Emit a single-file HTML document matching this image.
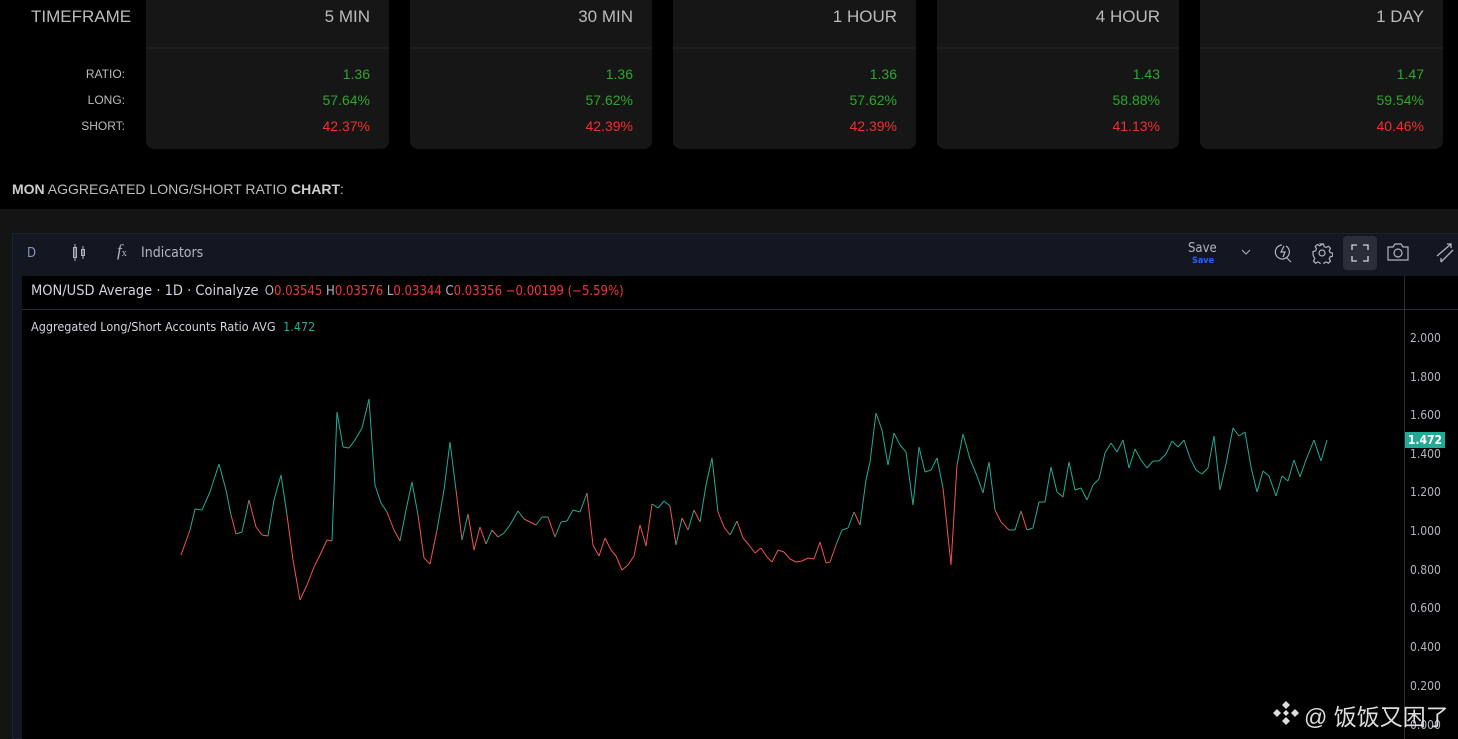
<!DOCTYPE html>
<html><head><meta charset="utf-8"><style>
*{margin:0;padding:0;box-sizing:border-box}
html,body{width:1458px;height:739px;overflow:hidden;background:#000;font-family:"Liberation Sans",Arial,sans-serif}
.card{position:absolute;top:0;height:149px;width:243px;background:#161616;border-radius:0 0 8px 8px}
.card .h{position:absolute;top:7px;right:19px;font-size:17px;color:#bbb}
.card .ln{position:absolute;top:47px;left:0;right:0;height:2px;background:#1f1f1f}
.card .v{position:absolute;right:19px;font-size:14px}
.g{color:#2ea62e}.r{color:#f03030}
.lbl{position:absolute;right:1333px;font-size:12px;color:#bbb}
.tf{position:absolute;left:31px;top:7px;font-size:17px;color:#bbb}
.title{position:absolute;left:12px;top:181px;font-size:14px;color:#bbb}
.title b{color:#ccc}
.band{position:absolute;left:0;top:209px;width:1458px;height:530px;background:#141414}
.cont{position:absolute;left:12px;top:233px;width:1446px;height:506px;background:#131722;border:1px solid #1e222d;border-right:none}
.pane{position:absolute;left:22px;top:276px;width:1436px;height:463px;background:#000}
.tb{position:absolute;font-family:"DejaVu Sans Condensed","Liberation Sans",sans-serif;color:#b2b5be}
.ax{position:absolute;left:1410px;font-size:12px;color:#b2b5be;font-family:"DejaVu Sans Condensed","Liberation Sans",sans-serif}
</style></head><body>
<div class="tf">TIMEFRAME</div>
<div class="lbl" style="top:67px">RATIO:</div>
<div class="lbl" style="top:93px">LONG:</div>
<div class="lbl" style="top:119px">SHORT:</div>

<div class="card" style="left:146px"><div class="h">5 MIN</div><div class="ln"></div><div class="v g" style="top:66px">1.36</div><div class="v g" style="top:92px">57.64%</div><div class="v r" style="top:118px">42.37%</div></div>
<div class="card" style="left:410px;width:242px"><div class="h">30 MIN</div><div class="ln"></div><div class="v g" style="top:66px">1.36</div><div class="v g" style="top:92px">57.62%</div><div class="v r" style="top:118px">42.39%</div></div>
<div class="card" style="left:673px"><div class="h">1 HOUR</div><div class="ln"></div><div class="v g" style="top:66px">1.36</div><div class="v g" style="top:92px">57.62%</div><div class="v r" style="top:118px">42.39%</div></div>
<div class="card" style="left:937px;width:242px"><div class="h">4 HOUR</div><div class="ln"></div><div class="v g" style="top:66px">1.43</div><div class="v g" style="top:92px">58.88%</div><div class="v r" style="top:118px">41.13%</div></div>
<div class="card" style="left:1200px"><div class="h">1 DAY</div><div class="ln"></div><div class="v g" style="top:66px">1.47</div><div class="v g" style="top:92px">59.54%</div><div class="v r" style="top:118px">40.46%</div></div>

<div class="title"><b>MON</b> AGGREGATED LONG/SHORT RATIO <b>CHART</b>:</div>
<div class="band"></div>
<div class="cont"></div>
<div class="tb" style="left:27px;top:246px;font-size:13px;color:#8a93b8">D</div>
<svg style="position:absolute;left:70px;top:243px" width="18" height="20" fill="none" stroke="#b2b5be" stroke-width="1"><rect x="3.5" y="4.5" width="3" height="10"/><line x1="5" y1="1" x2="5" y2="18"/><rect x="11.5" y="6.5" width="3" height="6"/><line x1="13" y1="3" x2="13" y2="16"/></svg>
<div class="tb" style="left:117px;top:241px;font-size:17px;font-style:italic;font-family:'Liberation Serif',serif">f<span style="font-size:10px;font-style:normal">x</span></div>
<div class="tb" style="left:141px;top:245px;font-size:14px">Indicators</div>
<div class="tb" style="left:1188px;top:241px;font-size:13px">Save</div>
<div class="tb" style="left:1192px;top:256px;font-size:9px;color:#2962ff;font-weight:bold">Save</div>
<svg style="position:absolute;left:1240px;top:248px" width="12" height="8" fill="none" stroke="#b2b5be"><path d="M2 2l4 4 4-4"/></svg>
<svg style="position:absolute;left:1273px;top:242px" width="22" height="22" fill="none" stroke="#b2b5be" stroke-width="1.2"><path d="M9 3a7 7 0 1 0 4 1"/><path d="M13 15l5 5"/><path d="M11 4l-3 6h4l-2 5"/></svg>
<svg style="position:absolute;left:1311px;top:242px" width="22" height="22" fill="none" stroke="#b2b5be" stroke-width="1.2"><circle cx="11" cy="11" r="3"/><path d="M9.5 2h3l.6 2.5 2 1 2.3-1.3 2.1 2.1-1.3 2.3 1 2 2.5.6v3l-2.5.6-1 2 1.3 2.3-2.1 2.1-2.3-1.3-2 1-.6 2.5h-3l-.6-2.5-2-1-2.3 1.3-2.1-2.1 1.3-2.3-1-2L2 12.5v-3l2.5-.6 1-2L4.2 4.6l2.1-2.1 2.3 1.3 2-1z"/></svg>
<div style="position:absolute;left:1343px;top:236px;width:34px;height:34px;background:#2a2e39;border-radius:4px"></div>
<svg style="position:absolute;left:1350px;top:243px" width="20" height="20" fill="none" stroke="#d1d4dc" stroke-width="1.3"><path d="M2 7V2h5M13 2h5v5M18 13v5h-5M7 18H2v-5"/></svg>
<svg style="position:absolute;left:1387px;top:242px" width="22" height="20" fill="none" stroke="#b2b5be" stroke-width="1.2"><path d="M1 5h5l2-3h6l2 3h5v13H1z"/><circle cx="11" cy="11" r="4"/></svg>
<svg style="position:absolute;left:1435px;top:242px" width="20" height="22" fill="none" stroke-width="1.3"><path d="M2 14L16 2M12 2h4v4" stroke="#b2b5be"/><path d="M6 20L18 8M6 20v-4" stroke="#b2b5be"/></svg>

<div class="pane"></div>
<div style="position:absolute;left:22px;top:309px;width:1436px;height:1px;background:#2a2e39"></div>
<div style="position:absolute;left:1404px;top:276px;width:1px;height:463px;background:#2a2e39"></div>
<div class="tb" style="left:31px;top:283px;font-size:14.5px;color:#d1d4dc">MON/USD Average · 1D · Coinalyze <span style="font-size:13px;color:#b2b5be;margin-left:2px">O<span style="color:#f23645">0.03545</span> H<span style="color:#f23645">0.03576</span> L<span style="color:#f23645">0.03344</span> C<span style="color:#f23645">0.03356</span> <span style="color:#f23645">−0.00199 (−5.59%)</span></span></div>
<div class="tb" style="left:31px;top:319px;font-size:12.5px;color:#d1d4dc">Aggregated Long/Short Accounts Ratio AVG <span style="color:#22ab94;margin-left:4px">1.472</span></div>

<div class="ax" style="top:331px">2.000</div>
<div class="ax" style="top:370px">1.800</div>
<div class="ax" style="top:408px">1.600</div>
<div class="ax" style="top:447px">1.400</div>
<div class="ax" style="top:485px">1.200</div>
<div class="ax" style="top:524px">1.000</div>
<div class="ax" style="top:563px">0.800</div>
<div class="ax" style="top:601px">0.600</div>
<div class="ax" style="top:640px">0.400</div>
<div class="ax" style="top:679px">0.200</div>
<div class="ax" style="top:718px">0.000</div>
<div style="position:absolute;left:1405px;top:432px;width:40px;height:16px;background:#22ab94;color:#fff;font-size:12px;font-weight:bold;text-align:center;line-height:16px;font-family:'DejaVu Sans Condensed',sans-serif">1.472</div>

<svg id="ch" style="position:absolute;left:0;top:0" width="1458" height="739"></svg>

<svg style="position:absolute;left:1272px;top:700px" width="28" height="26" fill="#ddd"><path d="M14 1l4 4-4 4-4-4zM5 9l4 4-4 4-4-4zM23 9l4 4-4 4-4-4zM14 17l4 4-4 4-4-4zM14 10l3 3-3 3-3-3z"/></svg>
<div style="position:absolute;left:1304px;top:698px;font-size:23px;color:#ddd;font-family:'Liberation Sans','Noto Sans CJK SC',sans-serif">@ 饭饭又困了</div>

<script>
var p=[181,555,190,530,195,509,202,510,210,492,219,464,226,490,231,515,236,534,242,532,249,500,256,527,262,535,268,536,274,500,281,475,287,515,293,560,300,600,307,585,314,567,320,555,327,540,332,541,337,412,343,447,349,448,355,440,362,428,369,399,375,485,381,503,387,512,394,530,400,541,406,510,412,482,418,515,424,558,430,564,437,530,444,490,450,442,456,490,462,540,468,514,474,550,480,527,486,544,492,530,498,537,504,533,510,525,518,511,524,519,530,522,536,525,542,517,548,517,555,537,561,522,567,521,573,510,580,512,587,493,593,545,599,556,605,538,611,550,616,556,622,570,628,565,634,556,640,525,646,546,652,504,658,508,664,501,670,506,676,545,682,518,688,530,694,510,700,522,706,485,712,458,718,512,724,527,730,535,737,521,743,538,749,545,755,553,761,548,767,557,772,562,778,550,784,552,790,559,796,562,802,561,808,558,814,559,820,542,826,563,830,562,836,545,842,530,848,528,854,512,860,525,866,480,870,462,876,413,882,430,888,465,894,433,900,445,906,452,913,505,919,447,925,472,931,470,937,458,943,488,951,565,957,465,963,434,970,459,977,476,983,493,989,462,995,510,1001,522,1009,530,1015,530,1021,511,1027,530,1033,528,1039,502,1045,502,1051,467,1057,492,1063,497,1069,462,1075,490,1081,488,1087,500,1093,485,1099,479,1105,453,1111,443,1117,452,1123,440,1129,468,1135,449,1141,460,1147,468,1153,461,1159,461,1166,454,1172,441,1178,447,1184,440,1190,458,1196,470,1202,474,1208,468,1214,436,1220,490,1226,464,1233,428,1239,436,1245,432,1251,467,1257,492,1263,471,1269,476,1276,496,1282,476,1288,481,1294,460,1300,477,1306,460,1314,440,1321,461,1327,440];
var s='';
for(var i=0;i<p.length-2;i+=2){var y=Math.max(p[i+1],p[i+3]);var c=(p[i+3]>p[i+1]&&y>520)||y>545?'#f05350':'#22ab94';
s+='<line x1="'+p[i]+'" y1="'+p[i+1]+'" x2="'+p[i+2]+'" y2="'+p[i+3]+'" stroke="'+c+'" stroke-width="1"/>';}
document.getElementById('ch').innerHTML=s;
</script>
</body></html>
